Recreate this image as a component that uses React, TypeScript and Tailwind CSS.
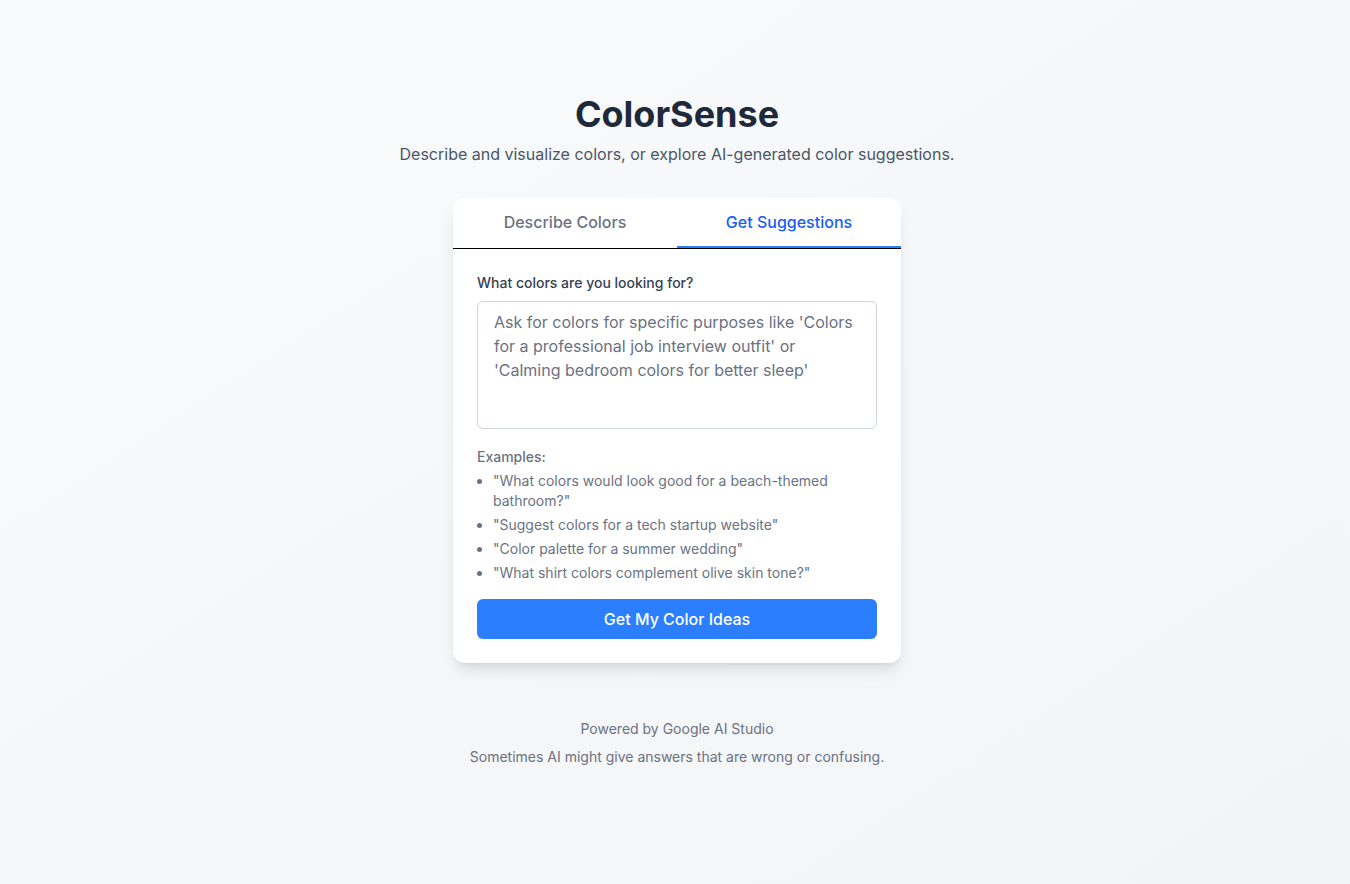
import React, { useState } from 'react';
import { clsx } from 'clsx';

const examples = [
  '"What colors would look good for a beach-themed bathroom?"',
  '"Suggest colors for a tech startup website"',
  '"Color palette for a summer wedding"',
  '"What shirt colors complement olive skin tone?"',
];

export default function App() {
  const [tab, setTab] = useState<'describe' | 'suggest'>('suggest');
  const [query, setQuery] = useState('');

  return (
    <div className="min-h-screen bg-gradient-to-br from-gray-50 to-gray-100 font-['Inter',sans-serif] pt-[94px] pb-12 pl-[20px] pr-4 flex flex-col items-center">
      <h1 className="text-4xl font-bold text-gray-800 mb-2">ColorSense</h1>
      <p className="text-base text-gray-600 mb-8">
        Describe and visualize colors, or explore AI-generated color suggestions.
      </p>

      <div className="w-full max-w-md bg-white rounded-xl shadow-lg overflow-hidden">
        <div className="flex border-b border-black">
          <button
            onClick={() => setTab('describe')}
            className={clsx(
              'flex-1 py-3 text-base font-medium border-b-2',
              tab === 'describe' ? 'text-blue-600 border-blue-500' : 'text-gray-500 border-transparent'
            )}
          >
            Describe Colors
          </button>
          <button
            onClick={() => setTab('suggest')}
            className={clsx(
              'flex-1 py-3 text-base font-medium border-b-2',
              tab === 'suggest' ? 'text-blue-600 border-blue-500' : 'text-gray-500 border-transparent'
            )}
          >
            Get Suggestions
          </button>
        </div>

        <div className="p-6">
          <label className="block text-sm font-medium text-gray-700 mb-2">
            What colors are you looking for?
          </label>
          <textarea
            value={query}
            onChange={(e) => setQuery(e.target.value)}
            placeholder="Ask for colors for specific purposes like 'Colors for a professional job interview outfit' or 'Calming bedroom colors for better sleep'"
            className="block w-full h-32 px-4 py-2 border border-gray-300 rounded-md text-base text-gray-800 placeholder:text-gray-500 resize-none focus:outline-none focus:ring-2 focus:ring-blue-500"
          />

          <div className="mt-[18px]">
            <p className="text-sm font-medium text-gray-500 mb-1">Examples:</p>
            <ul className="list-disc pl-4 space-y-1 text-sm text-gray-500">
              {examples.map((ex) => (
                <li key={ex}>{ex}</li>
              ))}
            </ul>
          </div>

          <button className="mt-4 w-full h-10 bg-blue-500 hover:bg-blue-600 text-white text-base font-medium rounded-md">
            Get My Color Ideas
          </button>
        </div>
      </div>

      <footer className="mt-14 text-center text-sm text-gray-500 space-y-2">
        <p>Powered by Google AI Studio</p>
        <p>Sometimes AI might give answers that are wrong or confusing.</p>
      </footer>
    </div>
  );
}
